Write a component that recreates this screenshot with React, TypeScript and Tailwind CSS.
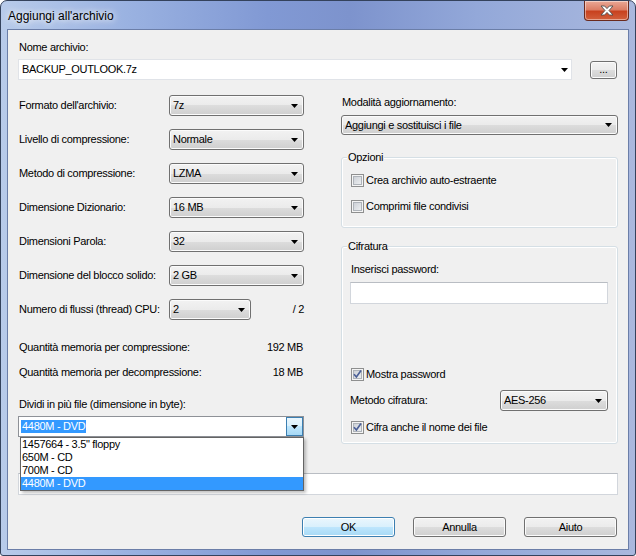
import React from 'react';

const font = "font-['Liberation_Sans',Arial,sans-serif]";

function Arrow() {
  return (
    <svg width="7" height="4" viewBox="0 0 7 4" className="shrink-0">
      <path d="M0 0H7L3.5 4Z" fill="#000" />
    </svg>
  );
}

function Combo({ value, className = '' }: { value: string; className?: string }) {
  return (
    <div
      className={`flex items-center rounded-[3px] border border-[#707070] bg-[linear-gradient(#f2f2f2_0%,#ebebeb_50%,#dddddd_50%,#cfcfcf_100%)] pl-[3px] pr-[5px] shadow-[inset_0_0_0_1px_#fbfbfb] ${className}`}
    >
      <span className="flex-1 truncate">{value}</span>
      <Arrow />
    </div>
  );
}

function Check({ label, checked = false }: { label: string; checked?: boolean }) {
  return (
    <div className="flex h-[13px] items-center gap-[2px]">
      <span className="flex h-[13px] w-[13px] shrink-0 items-center justify-center border border-[#8e8f8f] bg-[#f4f4f4]">
        <span className="flex h-[9px] w-[9px] items-center justify-center border border-[#aeb3b9] bg-[linear-gradient(135deg,#cdd1d7_0%,#eceef0_100%)]">
          {checked && (
            <svg width="9" height="9" viewBox="0 0 9 9" className="overflow-visible">
              <path d="M1 4.2L3.4 7L8 0.6" fill="none" stroke="#4a5f97" strokeWidth="1.7" />
            </svg>
          )}
        </span>
      </span>
      <span>{label}</span>
    </div>
  );
}

function Btn({ children, primary = false }: { children: React.ReactNode; primary?: boolean }) {
  return (
    <div
      className={`flex h-[20px] w-[93px] items-center justify-center rounded-[3px] border ${
        primary
          ? 'border-[#3c7fb1] bg-[linear-gradient(#eaf6fd_0%,#d9f0fc_50%,#bee6fd_50%,#a7d9f5_100%)] shadow-[inset_0_0_0_1px_#ffffff]'
          : 'border-[#707070] bg-[linear-gradient(#f2f2f2_0%,#ebebeb_50%,#dddddd_50%,#cfcfcf_100%)] shadow-[inset_0_0_0_1px_#fbfbfb]'
      }`}
    >
      {children}
    </div>
  );
}

function CloseButton() {
  return (
    <div className="mr-[6px] flex h-[20px] w-[45px] items-center justify-center rounded-b-[4px] border border-t-0 border-[#6a2a1e] bg-[linear-gradient(#eaa896_0%,#dc7e66_45%,#c8421f_55%,#d2603c_100%)] shadow-[inset_0_0_0_1px_rgba(255,255,255,0.45)]">
      <svg width="14" height="11" viewBox="0 0 14 11">
        <path
          d="M1 1H4.6L7 3.6L9.4 1H13L9 5.5L13 10H9.4L7 7.4L4.6 10H1L5 5.5Z"
          fill="#fff"
          stroke="#4d4d4d"
          strokeWidth="0.9"
        />
      </svg>
    </div>
  );
}

function Row({ label, children }: { label: string; children: React.ReactNode }) {
  return (
    <div className="flex h-[21px] items-center">
      <span className="w-[151px] pl-[1px]">{label}</span>
      {children}
    </div>
  );
}

export default function App() {
  return (
    <div className={`${font} h-[556px] w-[636px] text-[11px] leading-[13px] tracking-[-0.3px] text-black`}>
      <div className="flex h-full w-full flex-col rounded-t-[7px] rounded-b-[3px] border border-[#34425c] bg-[linear-gradient(90deg,#b8cbea_0%,#9ab2e1_20%,#8199d4_42%,#7d93cd_55%,#93a8d9_75%,#a9b8de_100%)]">
        {/* title bar */}
        <div className="flex h-[28px] shrink-0 items-start justify-between">
          <div className="pl-[7px] pt-[7px] text-[12px] leading-[16px] tracking-normal [text-shadow:0_0_6px_#fff,0_0_10px_rgba(255,255,255,0.8)]">
            Aggiungi all'archivio
          </div>
          <CloseButton />
        </div>

        {/* client area */}
        <div className="mx-[6px] mb-[5px] flex flex-1 flex-col border border-[#6b7ea8] bg-[#f0f0f0] px-[10px] pt-[11px]">
          <div className="pl-[1px]">Nome archivio:</div>
          <div className="mt-[5px] flex items-start">
            <div className="flex h-[21px] w-[554px] items-center border border-[#e0e3e8] bg-white pl-[3px] pr-[3px]">
              <span className="flex-1">BACKUP_OUTLOOK.7z</span>
              <Arrow />
            </div>
            <div className="ml-auto mr-[1px] mt-[2px] flex h-[18px] w-[27px] items-end justify-center rounded-[3px] border border-[#707070] bg-[linear-gradient(#f2f2f2_0%,#ebebeb_50%,#dddddd_50%,#cfcfcf_100%)] pb-[2px] shadow-[inset_0_0_0_1px_#fbfbfb]">
              ...
            </div>
          </div>

          <div className="mt-[15px] grid grid-cols-[286px_277px] items-start gap-x-[37px]">
            {/* left column */}
            <div className="flex flex-col">
              <div className="flex flex-col gap-[13px]">
                <Row label="Formato dell'archivio:">
                  <Combo value="7z" className="h-[21px] w-[135px]" />
                </Row>
                <Row label="Livello di compressione:">
                  <Combo value="Normale" className="h-[21px] w-[135px]" />
                </Row>
                <Row label="Metodo di compressione:">
                  <Combo value="LZMA" className="h-[21px] w-[135px]" />
                </Row>
                <Row label="Dimensione Dizionario:">
                  <Combo value="16 MB" className="h-[21px] w-[135px]" />
                </Row>
                <Row label="Dimensioni Parola:">
                  <Combo value="32" className="h-[21px] w-[135px]" />
                </Row>
                <Row label="Dimensione del blocco solido:">
                  <Combo value="2 GB" className="h-[21px] w-[135px]" />
                </Row>
                <Row label="Numero di flussi (thread) CPU:">
                  <Combo value="2" className="h-[21px] w-[82px]" />
                  <span className="flex-1 text-right">/ 2</span>
                </Row>
              </div>

              <div className="mt-[21px] flex justify-between pl-[1px] pr-[1px]">
                <span>Quantità memoria per compressione:</span>
                <span>192 MB</span>
              </div>
              <div className="mt-[12px] flex justify-between pl-[1px] pr-[1px]">
                <span>Quantità memoria per decompressione:</span>
                <span>18 MB</span>
              </div>

              <div className="mt-[19px] pl-[1px]">Dividi in più file (dimensione in byte):</div>
              <div className="relative z-10 mt-[5px] flex h-[21px] border border-[#8e9197] bg-white">
                <div className="flex flex-1 items-center pl-[2px]">
                  <span className="bg-[#3399ff] px-[1px] text-white">4480M - DVD</span>
                </div>
                <div className="flex w-[17px] items-center justify-center border border-[#3c7fb1] bg-[linear-gradient(#eaf6fd_0%,#d9f0fc_50%,#bee6fd_50%,#a7d9f5_100%)]">
                  <Arrow />
                </div>
                <div className="absolute left-[1px] right-[-1px] top-[20px] border border-[#646464] bg-white shadow-[2px_2px_3px_rgba(0,0,0,0.25)]">
                  <div className="h-[13px] pl-[1px]">1457664 - 3.5" floppy</div>
                  <div className="h-[13px] pl-[1px]">650M - CD</div>
                  <div className="h-[13px] pl-[1px]">700M - CD</div>
                  <div className="h-[13px] bg-[#3399ff] pl-[1px] text-white">4480M - DVD</div>
                </div>
              </div>
            </div>

            {/* right column */}
            <div className="flex flex-col pt-[1px]">
              <div className="pl-[1px]">Modalità aggiornamento:</div>
              <Combo value="Aggiungi e sostituisci i file" className="mt-[6px] h-[20px] w-full" />

              <fieldset className="mt-[16px] rounded-[3px] border border-[#d5dfe5] px-[9px] pb-[14px] shadow-[inset_0_0_0_1px_#ffffff]">
                <legend className="-ml-[4px] bg-[#f0f0f0] px-[1px]">Opzioni</legend>
                <div className="mt-[10px]">
                  <Check label="Crea archivio auto-estraente" />
                </div>
                <div className="mt-[13px]">
                  <Check label="Comprimi file condivisi" />
                </div>
              </fieldset>

              <fieldset className="mt-[12px] rounded-[3px] border border-[#d5dfe5] px-[9px] pb-[9px] shadow-[inset_0_0_0_1px_#ffffff]">
                <legend className="-ml-[4px] bg-[#f0f0f0] px-[1px]">Cifratura</legend>
                <div className="mt-[10px]">Inserisci password:</div>
                <div className="-ml-[1px] mt-[6px] h-[22px] w-[258px] border border-[#d2d6dc] border-t-[#b9bdc3] bg-white" />
                <div className="mt-[64px]">
                  <Check label="Mostra password" checked />
                </div>
                <div className="-ml-[1px] mt-[9px] flex h-[21px] w-[258px] items-center justify-between">
                  <span>Metodo cifratura:</span>
                  <Combo value="AES-256" className="h-[21px] w-[108px]" />
                </div>
                <div className="mt-[10px]">
                  <Check label="Cifra anche il nome dei file" checked />
                </div>
              </fieldset>
            </div>
          </div>

          <div className="mt-[29px] h-[22px] w-full border border-[#d2d6dc] border-t-[#b9bdc3] bg-white" />

          <div className="mt-[22px] flex justify-end gap-[18px] pr-[1px]">
            <Btn primary>OK</Btn>
            <Btn>Annulla</Btn>
            <Btn>Aiuto</Btn>
          </div>
        </div>
      </div>
    </div>
  );
}
